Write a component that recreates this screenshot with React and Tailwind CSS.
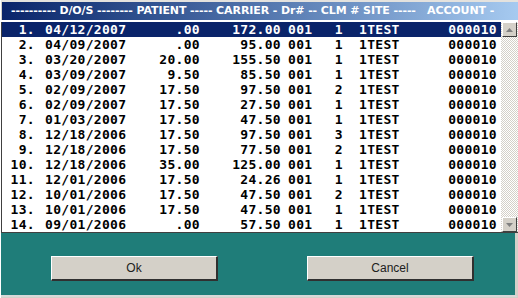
import React from "react";

const rows = [
  ["1.", "04/12/2007", ".00", "172.00", "001", "1"],
  ["2.", "04/09/2007", ".00", "95.00", "001", "1"],
  ["3.", "03/20/2007", "20.00", "155.50", "001", "1"],
  ["4.", "03/09/2007", "9.50", "85.50", "001", "1"],
  ["5.", "02/09/2007", "17.50", "97.50", "001", "2"],
  ["6.", "02/09/2007", "17.50", "27.50", "001", "1"],
  ["7.", "01/03/2007", "17.50", "47.50", "001", "1"],
  ["8.", "12/18/2006", "17.50", "97.50", "001", "3"],
  ["9.", "12/18/2006", "17.50", "77.50", "001", "2"],
  ["10.", "12/18/2006", "35.00", "125.00", "001", "1"],
  ["11.", "12/01/2006", "17.50", "24.26", "001", "1"],
  ["12.", "10/01/2006", "17.50", "47.50", "001", "2"],
  ["13.", "10/01/2006", "17.50", "47.50", "001", "1"],
  ["14.", "09/01/2006", ".00", "57.50", "001", "1"],
];

const ArrowBtn = ({ down }) => (
  <div className="h-[15px] w-[15px] bg-[#d4d0c8] border-t border-l border-t-white border-l-white border-b border-r border-b-[#404040] border-r-[#404040] flex items-center justify-center">
    <svg width="7" height="4" viewBox="0 0 7 4">
      {down ? <path d="M0 0h7L3.5 4z" fill="#808080" /> : <path d="M0 4h7L3.5 0z" fill="#808080" />}
    </svg>
  </div>
);

const Btn = ({ children }) => (
  <button className="w-[167px] h-[25px] bg-[#d4d0c8] border-t border-l border-t-white border-l-white border-b-2 border-r-2 border-b-[#303030] border-r-[#303030] text-[12px] text-[#202020] font-['Liberation_Sans',sans-serif]">
    {children}
  </button>
);

export default function App() {
  return (
    <div className="w-[518px] h-[298px] bg-[#d4d0c8] flex flex-col border-l border-l-white overflow-hidden">
      <div className="h-[2px] bg-[#e4e2de]" />
      <div className="h-[18px] ml-[1px] bg-linear-to-r from-[#0a246a] to-[#a6caf0] text-white text-[11px] tracking-[-0.1px] font-bold font-['DejaVu_Sans',sans-serif] whitespace-pre leading-[18px] pl-[9px]">
        {"---------- D/O/S -------- PATIENT ----- CARRIER - Dr# -- CLM # SITE -----   ACCOUNT -"}
      </div>
      <div className="h-[2px] bg-white" />
      <div className="h-[211px] flex bg-white border-l border-l-[#404040] border-b border-b-[#404040]">
        <div className="flex-1 flex flex-col font-['DejaVu_Sans_Mono',monospace] font-bold text-[13px] tracking-[0.3px]">
          {rows.map((r, i) => (
            <div
              key={i}
              className={`h-[15px] leading-[15px] flex ${i === 0 ? "bg-[#0a246a] text-white" : "text-black"}`}
            >
              <span className="w-[33px] text-right">{r[0]}</span>
              <span className="w-[90px] pl-[10px]">{r[1]}</span>
              <span className="w-[75px] text-right">{r[2]}</span>
              <span className="w-[81px] text-right">{r[3]}</span>
              <span className="w-[35px] pl-[7px]">{r[4]}</span>
              <span className="w-[27px] text-right">{r[5]}</span>
              <span className="w-[58px] pl-[16px]">1TEST</span>
              <span className="w-[96px] text-right">000010</span>
            </div>
          ))}
        </div>
        <div className="w-[17px] flex flex-col bg-[repeating-conic-gradient(#d4d0c8_0_25%,#ffffff_0_50%)] bg-[length:2px_2px] pl-[1px]">
          <ArrowBtn />
          <div className="flex-1" />
          <ArrowBtn down />
        </div>
      </div>
      <div className="flex-1 bg-[#1f7d79] flex gap-[89px] pl-[50px] pt-[23px] border-b-[2px] border-b-[#d8d8d8] border-r-[3px] border-r-[#d4d0c8] mb-[1px]">
        <Btn>Ok</Btn>
        <Btn>Cancel</Btn>
      </div>
    </div>
  );
}
